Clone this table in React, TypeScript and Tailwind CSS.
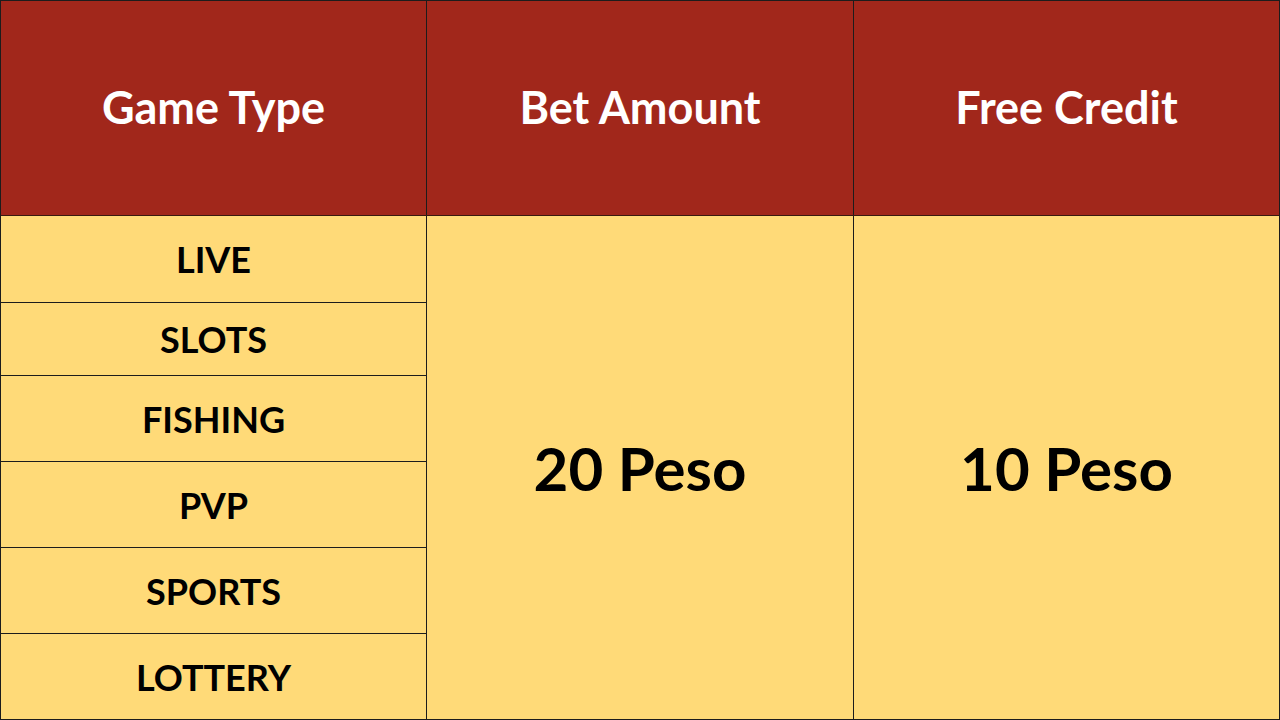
import React from 'react';

const gameTypes = [
  { name: 'LIVE', h: 'h-[87px]' },
  { name: 'SLOTS', h: 'h-[73px]' },
  { name: 'FISHING', h: 'h-[86px]' },
  { name: 'PVP', h: 'h-[86px]' },
  { name: 'SPORTS', h: 'h-[86px]' },
  { name: 'LOTTERY', h: 'flex-1' },
];

export default function App() {
  return (
    <div
      className="w-[1280px] h-[720px] flex flex-col bg-[#ffda78] border border-[#1c1c1c] overflow-hidden"
      style={{ fontFamily: 'Lato, "Open Sans", sans-serif' }}
    >
      {/* Header */}
      <div className="h-[215px] flex bg-[#a1271b] border-b border-[#3a1a10] text-white font-bold text-[45px]">
        <div className="w-[426px] flex items-center justify-center border-r border-[#1c1c1c]">Game Type</div>
        <div className="w-[427px] flex items-center justify-center border-r border-[#1c1c1c]">Bet Amount</div>
        <div className="flex-1 flex items-center justify-center">Free Credit</div>
      </div>

      {/* Body */}
      <div className="flex-1 flex text-black font-bold">
        <div className="w-[426px] flex flex-col border-r border-[#1c1c1c] text-[36px]">
          {gameTypes.map((g, i) => (
            <div
              key={g.name}
              className={`${g.h} flex items-center justify-center ${i < gameTypes.length - 1 ? 'border-b border-[#1c1c1c]' : ''}`}
            >
              {g.name}
            </div>
          ))}
        </div>
        <div className="w-[427px] flex items-center justify-center border-r border-[#1c1c1c] text-[60px]">20 Peso</div>
        <div className="flex-1 flex items-center justify-center text-[60px]">10 Peso</div>
      </div>
    </div>
  );
}
